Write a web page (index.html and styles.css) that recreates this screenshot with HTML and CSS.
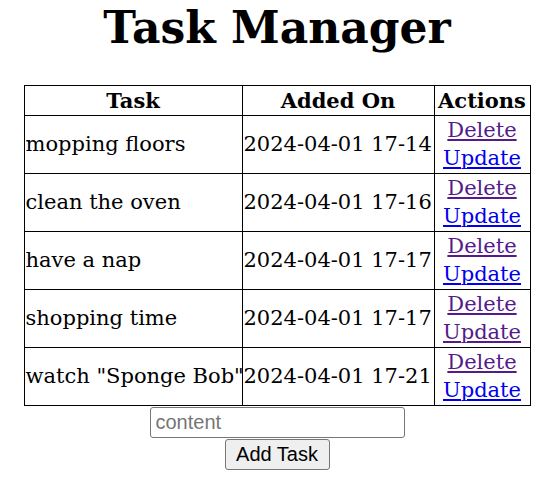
FILE: index.html
```html
<!DOCTYPE html>
<html>
<head>
<meta charset="utf-8">
<title>Task Manager</title>
<link rel="stylesheet" href="styles.css">
</head>
<body>
<h1 class="title">Task Manager</h1>
<table class="tasks">
  <colgroup>
    <col class="c-task">
    <col class="c-date">
    <col class="c-act">
  </colgroup>
  <thead>
    <tr><th>Task</th><th>Added On</th><th>Actions</th></tr>
  </thead>
  <tbody>
    <tr><td>mopping floors</td><td>2024-04-01 17-14</td><td class="act"><a class="visited" href="#">Delete</a><br><a href="#">Update</a></td></tr>
    <tr><td>clean the oven</td><td>2024-04-01 17-16</td><td class="act"><a class="visited" href="#">Delete</a><br><a href="#">Update</a></td></tr>
    <tr><td>have a nap</td><td>2024-04-01 17-17</td><td class="act"><a class="visited" href="#">Delete</a><br><a href="#">Update</a></td></tr>
    <tr><td>shopping time</td><td>2024-04-01 17-17</td><td class="act"><a class="visited" href="#">Delete</a><br><a class="visited" href="#">Update</a></td></tr>
    <tr><td>watch "Sponge Bob"</td><td>2024-04-01 17-21</td><td class="act"><a class="visited" href="#">Delete</a><br><a href="#">Update</a></td></tr>
  </tbody>
</table>
<form class="add-form" onsubmit="return false">
  <input class="content-input" type="text" placeholder="content">
  <button class="add-btn" type="submit">Add Task</button>
</form>
</body>
</html>
```
FILE: styles.css
```css
html, body { background: #fff; }
body {
  margin: 0 8px;
  padding-left: 1px;
  font-family: "DejaVu Serif", "Liberation Serif", serif;
  font-size: 21px;
  color: #000;
}
.title {
  margin: 0 0 30px;
  height: 55px;
  line-height: 55px;
  text-align: center;
  font-size: 44px;
  font-weight: bold;
}
.tasks {
  margin: 0 auto;
  border-collapse: collapse;
  table-layout: fixed;
  width: 506px;
}
.c-task { width: 218px; }
.c-date { width: 192px; }
.c-act { width: 96px; }
.tasks th, .tasks td {
  border: 1px solid #000;
  padding: 1px;
  line-height: 27px;
  white-space: nowrap;
}
.tasks th { height: 27px; font-weight: bold; text-align: center; }
.tasks td { height: 55px; text-align: left; vertical-align: middle; }
.tasks td.act { text-align: center; line-height: 27.5px; }
a { color: #0000ee; text-decoration: underline; }
a.visited { color: #551a8b; }
.add-form {
  display: flex;
  flex-direction: column;
  align-items: center;
  gap: 1px;
  margin: 1px 0 0;
}
.content-input {
  box-sizing: border-box;
  width: 255px;
  height: 31px;
  padding: 1px 5px;
  border: 1px solid #767676;
  border-radius: 3px;
  font-family: "Liberation Sans", Arial, sans-serif;
  font-size: 20px;
}
.content-input::placeholder { color: #757575; }
.add-btn {
  box-sizing: border-box;
  width: 105px;
  height: 31px;
  padding: 1px 6px;
  border: 1px solid #767676;
  border-radius: 3px;
  background: #efefef;
  font-family: "Liberation Sans", Arial, sans-serif;
  font-size: 20px;
  color: #000;
}
```
